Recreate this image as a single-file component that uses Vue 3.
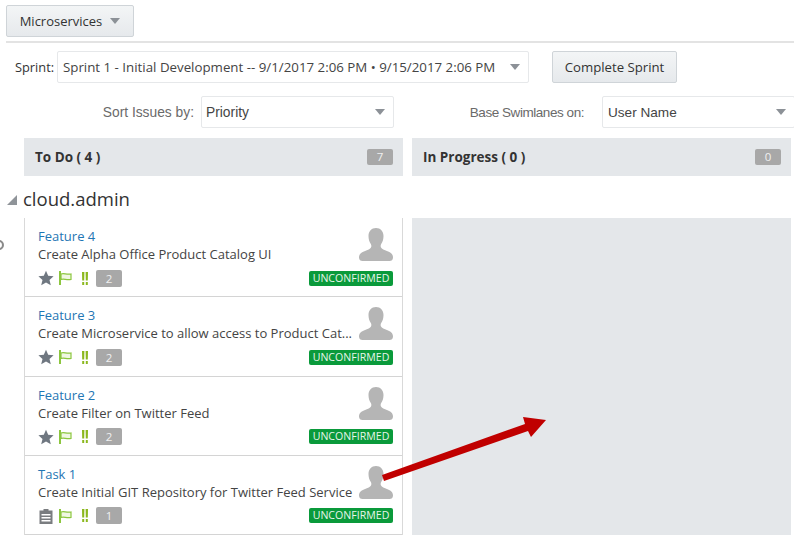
<template>
	<div class="page">
		<div class="top">
			<button class="btn menu-btn">Microservices <span class="caret"></span></button>
		</div>
		<div class="sprint-row">
			<span class="sprint-label">Sprint:</span>
			<div class="select sprint-select">
				<span>Sprint 1 - Initial Development -- 9/1/2017 2:06 PM • 9/15/2017 2:06 PM</span>
				<span class="caret"></span>
			</div>
			<button class="btn complete-btn">Complete Sprint</button>
		</div>
		<div class="sort-row">
			<span class="field-label sort-label">Sort Issues by:</span>
			<div class="select sort-select"><span>Priority</span><span class="caret"></span></div>
			<span class="field-label base-label">Base Swimlanes on:</span>
			<div class="select base-select"><span>User Name</span><span class="caret"></span></div>
		</div>
		<div class="columns">
			<div v-for="col in columns" :key="col.name" class="col-head">
				<span>{{ col.name }}</span>
				<span class="col-count">{{ col.count }}</span>
			</div>
		</div>
		<div class="lane-title">
			<span class="lane-tri"></span>
			<span>cloud.admin</span>
		</div>
		<div class="columns lane">
			<div class="cards">
				<div v-for="card in cards" :key="card.title" class="card">
					<div class="card-text">
						<a class="card-title">{{ card.title }}</a>
						<div class="card-desc">{{ card.desc }}</div>
					</div>
					<svg class="avatar" viewBox="0 0 34 33" width="34" height="33">
						<path fill="#b5b5b5" d="M17 0c-4.5 0-7.5 3.5-7.5 8 0 3 .8 6 2.300 8 .7 1 .7 2.5.2 3.5-.8 1.5-3 2.5-6.5 3.800C2.5 24.5 0 26 0 29.5 0 32 1.5 33 3.5 33h27c2 0 3.5-1 3.5-3.500 0-3.5-2.5-5-5.5-6.200-3.500-1.300-5.700-2.300-6.500-3.800-.5-1-.5-2.500.2-3.500 1.500-2 2.300-5 2.300-8 0-4.500-3-8-7.500-8z" />
					</svg>
					<div class="card-foot">
						<svg v-if="card.kind === 'star'" class="kind" viewBox="0 0 16 16" width="16" height="16">
							<path fill="#6f7780" d="M8 .8l2.200 5 5.400.5-4.100 3.600 1.300 5.300L8 12.400l-4.800 2.800 1.300-5.300L.4 6.300l5.400-.5z" />
						</svg>
						<svg v-else class="kind" viewBox="0 0 16 16" width="16" height="16">
							<path fill="#7a7d80" fill-rule="evenodd" d="M1.500 2.500h4V1h5v1.500h4V16h-13zM3.500 6v1.500h9V6zm0 3v1.500h9V9zm0 3v1.500h9V12z" />
						</svg>
						<svg class="flag" viewBox="0 0 14 14" width="14" height="14">
							<path fill="#8cc63f" d="M0 0h2v14H0z" />
							<path fill="#f0f7e2" stroke="#8cc63f" stroke-width="1.2" d="M2 3c3-1.500 5 1 10 0v5.500c-5 1-7-1.500-10 0z" />
						</svg>
						<svg class="prio" viewBox="0 0 6 13" width="6" height="13">
							<path fill="#8cb81e" d="M0 0h2.400l-.2 8.500H.2zM3.600 0H6l-.2 8.500H3.800zM.2 10h2v3h-2zM3.800 10h2v3h-2z" />
						</svg>
						<span class="points">{{ card.points }}</span>
						<span class="status">UNCONFIRMED</span>
					</div>
				</div>
			</div>
			<div class="empty-col"></div>
		</div>
		<svg class="arrow" viewBox="0 0 794 544" width="794" height="544">
			<path fill="#c00000" d="M384 481L382 475L525 424L523 417L546 420L531 437L528 431Z" />
		</svg>
		<div class="stray"></div>
	</div>
</template>

<script setup>
const columns = [
	{ name: 'To Do ( 4 )', count: 7 },
	{ name: 'In Progress ( 0 )', count: 0 },
]

const cards = [
	{ title: 'Feature 4', desc: 'Create Alpha Office Product Catalog UI', kind: 'star', points: 2 },
	{ title: 'Feature 3', desc: 'Create Microservice to allow access to Product Cat...', kind: 'star', points: 2 },
	{ title: 'Feature 2', desc: 'Create Filter on Twitter Feed', kind: 'star', points: 2 },
	{ title: 'Task 1', desc: 'Create Initial GIT Repository for Twitter Feed Service', kind: 'task', points: 1 },
]
</script>

<style>
html, body {
	margin: 0;
	background: #fff;
}
</style>

<style scoped>
.page {
	position: relative;
	width: 794px;
	height: 544px;
	overflow: hidden;
	padding-top: 5px;
	box-sizing: border-box;
	font-family: "Open Sans", "Noto Sans", sans-serif;
	font-size: 13px;
	color: #333;
}

.top {
	margin-left: 6px;
	height: 36px;
	border-bottom: 2px solid #e3e3e3;
}

.btn {
	display: inline-flex;
	align-items: center;
	justify-content: center;
	height: 32px;
	padding: 0;
	box-sizing: border-box;
	background: linear-gradient(#f3f5f6, #e6e9ec);
	border: 1px solid #cfd4d8;
	border-radius: 2px;
	font: inherit;
	color: #333;
}

.menu-btn {
	width: 128px;
	gap: 8px;
	font-size: 13px;
}

.caret {
	display: inline-block;
	flex: none;
	width: 0;
	height: 0;
	border-left: 5px solid transparent;
	border-right: 5px solid transparent;
	border-top: 6px solid #8c9197;
}

.sprint-row {
	display: flex;
	align-items: center;
	margin-top: 8px;
	padding-left: 15px;
	height: 32px;
}

.sprint-label {
	width: 42px;
	flex: none;
	font-size: 12.8px;
}

.select {
	display: flex;
	flex: none;
	align-items: center;
	justify-content: space-between;
	height: 32px;
	box-sizing: border-box;
	padding: 0 8px 0 5px;
	background: #fff;
	border: 1px solid #e6e8ea;
	border-radius: 2px;
	font-size: 13.3px;
	color: #444;
}

.sprint-select {
	width: 472px;
}

.complete-btn {
	flex: none;
	width: 125px;
	margin-left: 23px;
	font-size: 13.2px;
}

.sort-row {
	display: flex;
	align-items: center;
	margin-top: 13px;
	height: 32px;
}

.field-label {
	flex: none;
	font-family: "Liberation Sans", Arial, sans-serif;
	font-size: 13.8px;
	color: #6a6a6a;
	text-align: right;
}

.sort-label {
	width: 194px;
}

.sort-select {
	width: 193px;
	margin-left: 7px;
	padding-left: 4px;
	font-family: "Liberation Sans", Arial, sans-serif;
	font-size: 13.8px;
}

.base-label {
	width: 190px;
	font-size: 13.5px;
	letter-spacing: -0.45px;
}

.base-select {
	width: 193px;
	margin-left: 18px;
	font-family: "Liberation Sans", Arial, sans-serif;
	font-size: 13.6px;
}

.columns {
	display: grid;
	grid-template-columns: 379px 379px;
	gap: 9px;
	margin-top: 10px;
	margin-left: 24px;
}

.col-head {
	display: flex;
	align-items: center;
	justify-content: space-between;
	height: 38px;
	padding: 0 10px 0 11px;
	background: #e4e7ea;
	font-size: 13.5px;
	font-weight: 700;
	color: #333;
}

.col-count {
	width: 26px;
	height: 16px;
	line-height: 16px;
	border-radius: 2px;
	background: #a8a8a8;
	color: #f0f0f0;
	font-size: 11.5px;
	font-weight: 400;
	text-align: center;
}

.lane-title {
	display: flex;
	align-items: center;
	gap: 6px;
	height: 42px;
	box-sizing: border-box;
	padding: 3px 0 0 7px;
	font-size: 18.5px;
	color: #333;
}

.lane-tri {
	width: 0;
	height: 0;
	border-left: 10px solid transparent;
	border-bottom: 10px solid #8f9499;
	margin-top: 3px;
}

.lane {
	margin-top: 0;
}

.cards {
	border: solid #d9d9d9;
	border-width: 0 1px;
	min-width: 0;
}

.card {
	display: grid;
	grid-template-columns: minmax(0, 1fr) 34px;
	align-content: start;
	height: 79.25px;
	box-sizing: border-box;
	padding: 9px 9px 0 13px;
	border-bottom: 1px solid #d4d4d4;
}

.card-title {
	display: block;
	font-size: 13px;
	line-height: 18px;
	color: #1f76b4;
}

.card-desc {
	font-size: 13px;
	line-height: 18px;
	color: #444;
	white-space: nowrap;
}

.avatar {
	margin-top: 1px;
}

.card-foot {
	grid-column: 1 / 3;
	display: flex;
	align-items: center;
	margin-top: 7px;
	height: 16px;
}

.kind {
	flex: none;
	margin-right: 5px;
}

.flag {
	flex: none;
	margin-right: 9px;
}

.prio {
	flex: none;
	margin-right: 8px;
}

.points {
	flex: none;
	width: 26px;
	height: 17px;
	line-height: 17px;
	border-radius: 2px;
	background: #a8a8a8;
	color: #f0f0f0;
	font-size: 11.5px;
	text-align: center;
}

.status {
	flex: none;
	margin-left: auto;
	width: 84px;
	height: 15px;
	line-height: 15px;
	border-radius: 2px;
	background: #0a9a3b;
	color: #e6f5ea;
	font-size: 10.6px;
	text-align: center;
}

.empty-col {
	background: #e4e7ea;
	height: 317px;
}

.arrow {
	position: absolute;
	left: 0;
	top: 0;
	pointer-events: none;
}

.stray {
	position: absolute;
	left: -6px;
	top: 240px;
	width: 6px;
	height: 6px;
	border: 2px solid #8a8a8a;
	border-radius: 50%;
}
</style>
